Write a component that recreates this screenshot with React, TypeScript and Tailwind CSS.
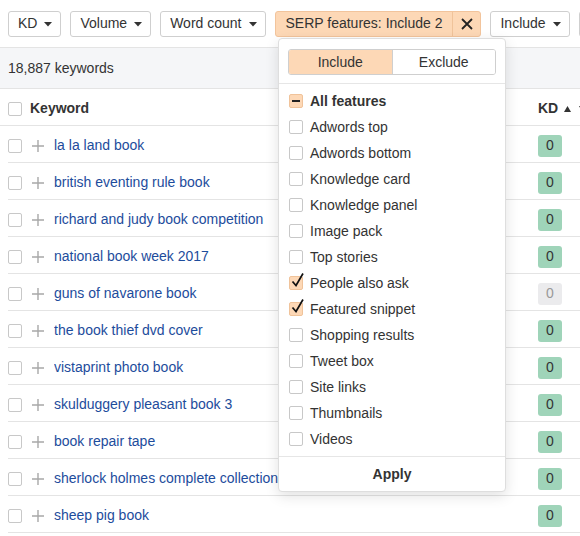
import { Fragment } from 'react'

type Row = { keyword: string; kd: number; muted?: boolean }

const rows: Row[] = [
  { keyword: 'la la land book', kd: 0 },
  { keyword: 'british eventing rule book', kd: 0 },
  { keyword: 'richard and judy book competition', kd: 0 },
  { keyword: 'national book week 2017', kd: 0 },
  { keyword: 'guns of navarone book', kd: 0, muted: true },
  { keyword: 'the book thief dvd cover', kd: 0 },
  { keyword: 'vistaprint photo book', kd: 0 },
  { keyword: 'skulduggery pleasant book 3', kd: 0 },
  { keyword: 'book repair tape', kd: 0 },
  { keyword: 'sherlock holmes complete collection', kd: 0 },
  { keyword: 'sheep pig book', kd: 0 },
]

const features: { label: string; checked?: boolean }[] = [
  { label: 'Adwords top' },
  { label: 'Adwords bottom' },
  { label: 'Knowledge card' },
  { label: 'Knowledge panel' },
  { label: 'Image pack' },
  { label: 'Top stories' },
  { label: 'People also ask', checked: true },
  { label: 'Featured snippet', checked: true },
  { label: 'Shopping results' },
  { label: 'Tweet box' },
  { label: 'Site links' },
  { label: 'Thumbnails' },
  { label: 'Videos' },
]

const Caret = () => (
  <svg width="8" height="5" viewBox="0 0 8 5" className="ml-[7px] mt-[1px]">
    <path d="M0 0h8L4 4.5z" fill="#333" />
  </svg>
)

const Box = () => (
  <span className="block w-[14px] h-[14px] shrink-0 rounded-[2px] border border-[#c8c8c8] bg-white" />
)

const Plus = () => (
  <svg width="12" height="12" viewBox="0 0 12 12" className="shrink-0">
    <path d="M6 0v12M0 6h12" stroke="#a8a8a8" strokeWidth="1.4" />
  </svg>
)

const FilterButton = ({ label }: { label: string }) => (
  <button className="flex items-center h-[26px] pl-[9px] pr-[8px] shrink-0 rounded-[3px] border border-[#cfcfcf] bg-white text-[14px] text-[#333]">
    {label}
    <Caret />
  </button>
)

export default function App() {
  return (
    <div
      className="relative w-[580px] h-[536px] overflow-hidden bg-white text-[14px] text-[#333]"
      style={{ fontFamily: '"Liberation Sans", Arial, Helvetica, sans-serif' }}>
      {/* filter bar */}
      <div className="flex items-center gap-[9px] h-[48px] pl-[8px] border-b border-[#e4e4e4]">
        <FilterButton label="KD" />
        <FilterButton label="Volume" />
        <FilterButton label="Word count" />
        <div className="flex h-[26px] shrink-0 rounded-[3px] border border-[#f2c49c] bg-[#fdd8b6]">
          <span className="flex items-center pl-[10px] pr-[10px] border-r border-[#f0c39a]">SERP features: Include 2</span>
          <span className="flex items-center justify-center w-[27px]">
            <svg width="12" height="12" viewBox="0 0 12 12">
              <path d="M1 1l10 10M11 1L1 11" stroke="#222" strokeWidth="1.8" />
            </svg>
          </span>
        </div>
        <FilterButton label="Include" />
        <span className="block h-[26px] w-[40px] shrink-0 rounded-[3px] border border-[#cfcfcf] bg-white" />
      </div>

      {/* summary */}
      <div className="flex items-center h-[41px] px-[8px] pt-[1px] bg-[#f5f6f8] border-b border-[#e4e4e4]">18,887 keywords</div>

      {/* table */}
      <div className="w-[640px]">
        <div className="flex items-center h-[37px] pt-[3px] border-b border-[#e4e4e4] pl-[8px]">
          <Box />
          <span className="ml-[8px] font-bold text-[#333] w-[508px]">Keyword</span>
          <span className="flex items-center font-bold">
            KD
            <svg width="7" height="6" viewBox="0 0 7 6" className="ml-[6px]">
              <path d="M0 6h7L3.5 0z" fill="#333" />
            </svg>
            <svg width="7" height="6" viewBox="0 0 7 6" className="ml-[8px]">
              <path d="M0 0h7L3.5 6z" fill="#333" />
            </svg>
          </span>
        </div>
        {rows.map((r) => (
          <Fragment key={r.keyword}>
            <div className="flex items-center h-[37px] pt-[3px] ml-[8px] border-b border-[#e4e4e4]">
              <Box />
              <span className="ml-[10px]">
                <Plus />
              </span>
              <span className="ml-[10px] w-[484px] whitespace-nowrap overflow-hidden text-[#1d4c9c]">{r.keyword}</span>
              <span
                className={`flex items-center justify-center w-[24px] h-[22px] rounded-[3px] ${
                  r.muted ? 'bg-[#ebebed] text-[#999]' : 'bg-[#9fd4b9] text-[#333]'
                }`}>
                {r.kd}
              </span>
            </div>
          </Fragment>
        ))}
      </div>

      {/* SERP features dropdown */}
      <div className="absolute left-[278px] top-[38px] w-[228px] rounded-[4px] border border-[#dedede] bg-white shadow-[0_4px_14px_rgba(0,0,0,0.12)]">
        <div className="px-[9px] pt-[10px] pb-[8px] border-b border-[#e6e6e6]">
          <div className="flex h-[26px] rounded-[3px] overflow-hidden border border-[#cfcfcf]">
            <span className="flex-1 flex items-center justify-center bg-[#fdd8b6]">Include</span>
            <span className="flex-1 flex items-center justify-center bg-white border-l border-[#cfcfcf]">Exclude</span>
          </div>
        </div>
        <div className="pt-[4px] pb-[4px]">
          <div className="flex items-center h-[26px] pl-[10px]">
            <span className="flex items-center justify-center w-[14px] h-[14px] rounded-[2px] border border-[#f0c39a] bg-[#fdd8b6]">
              <span className="block w-[8px] h-[2px] bg-[#222]" />
            </span>
            <span className="ml-[7px] font-bold">All features</span>
          </div>
          {features.map((f) => (
            <div key={f.label} className="flex items-center h-[26px] pl-[10px]">
              {f.checked ? (
                <span className="relative block w-[14px] h-[14px] rounded-[2px] border border-[#f0c39a] bg-[#fdd8b6]">
                  <svg width="16" height="16" viewBox="0 0 16 16" className="absolute left-[0px] top-[-5px]">
                    <path d="M2.5 9.5l3.5 4L13 1.5" fill="none" stroke="#111" strokeWidth="1.7" />
                  </svg>
                </span>
              ) : (
                <Box />
              )}
              <span className="ml-[7px]">{f.label}</span>
            </div>
          ))}
        </div>
        <div className="flex items-center justify-center h-[35px] border-t border-[#e6e6e6] font-bold">Apply</div>
      </div>
    </div>
  )
}
